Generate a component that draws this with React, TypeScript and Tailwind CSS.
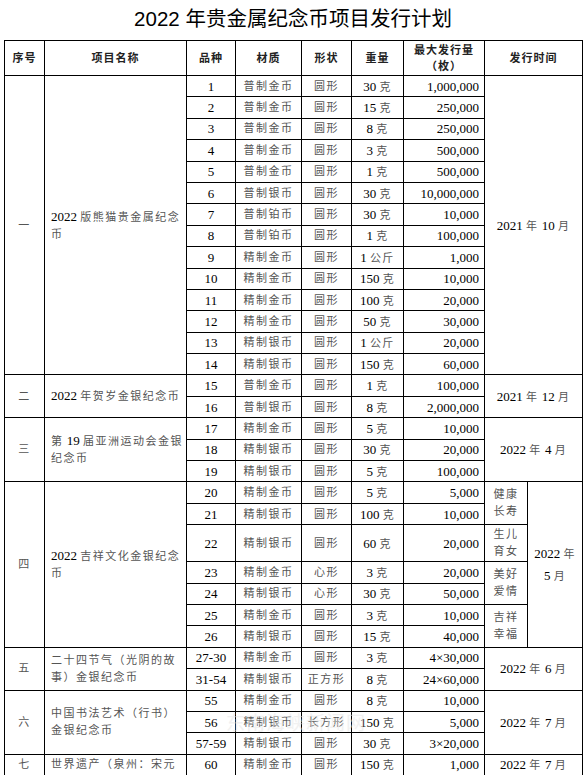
import React from "react";

type Row = [string, string, string, string, string];

interface Section {
  no: string;
  name: string[];
  date: string[];
  rows: Row[];
}

const sections: Section[] = [
  {
    no: "一",
    name: ["2022 版熊猫贵金属纪念", "币"],
    date: ["2021 年 10 月"],
    rows: [
      ["1", "普制金币", "圆形", "30 克", "1,000,000"],
      ["2", "普制金币", "圆形", "15 克", "250,000"],
      ["3", "普制金币", "圆形", "8 克", "250,000"],
      ["4", "普制金币", "圆形", "3 克", "500,000"],
      ["5", "普制金币", "圆形", "1 克", "500,000"],
      ["6", "普制银币", "圆形", "30 克", "10,000,000"],
      ["7", "普制铂币", "圆形", "30 克", "10,000"],
      ["8", "普制铂币", "圆形", "1 克", "100,000"],
      ["9", "精制金币", "圆形", "1 公斤", "1,000"],
      ["10", "精制金币", "圆形", "150 克", "10,000"],
      ["11", "精制金币", "圆形", "100 克", "20,000"],
      ["12", "精制金币", "圆形", "50 克", "30,000"],
      ["13", "精制银币", "圆形", "1 公斤", "20,000"],
      ["14", "精制银币", "圆形", "150 克", "60,000"],
    ],
  },
  {
    no: "二",
    name: ["2022 年贺岁金银纪念币"],
    date: ["2021 年 12 月"],
    rows: [
      ["15", "普制金币", "圆形", "1 克", "100,000"],
      ["16", "普制银币", "圆形", "8 克", "2,000,000"],
    ],
  },
  {
    no: "三",
    name: ["第 19 届亚洲运动会金银", "纪念币"],
    date: ["2022 年 4 月"],
    rows: [
      ["17", "精制金币", "圆形", "5 克", "10,000"],
      ["18", "精制银币", "圆形", "30 克", "20,000"],
      ["19", "精制银币", "圆形", "5 克", "100,000"],
    ],
  },
];

const later: Section[] = [
  {
    no: "五",
    name: ["二十四节气（光阴的故", "事）金银纪念币"],
    date: ["2022 年 6 月"],
    rows: [
      ["27-30", "精制金币", "圆形", "3 克", "4×30,000"],
      ["31-54", "精制银币", "正方形", "8 克", "24×60,000"],
    ],
  },
  {
    no: "六",
    name: ["中国书法艺术（行书）", "金银纪念币"],
    date: ["2022 年 7 月"],
    rows: [
      ["55", "精制金币", "圆形", "8 克", "10,000"],
      ["56", "精制银币", "长方形", "150 克", "5,000"],
      ["57-59", "精制银币", "圆形", "30 克", "3×20,000"],
    ],
  },
  {
    no: "七",
    name: ["世界遗产（泉州：宋元"],
    date: ["2022 年 7 月"],
    rows: [["60", "精制金币", "圆形", "150 克", "1,000"]],
  },
];

// 吉祥文化 rows with the theme sub-column
const jixiang: { row: Row; theme?: string[]; span?: number; tall?: boolean }[] = [
  { row: ["20", "精制金币", "圆形", "5 克", "5,000"], theme: ["健康", "长寿"], span: 2 },
  { row: ["21", "精制银币", "圆形", "100 克", "10,000"] },
  { row: ["22", "精制银币", "圆形", "60 克", "20,000"], theme: ["生儿", "育女"], span: 1, tall: true },
  { row: ["23", "精制金币", "心形", "3 克", "20,000"], theme: ["美好", "爱情"], span: 2 },
  { row: ["24", "精制银币", "心形", "30 克", "50,000"] },
  { row: ["25", "精制金币", "圆形", "3 克", "10,000"], theme: ["吉祥", "幸福"], span: 2 },
  { row: ["26", "精制银币", "圆形", "15 克", "40,000"] },
];

const Mixed = ({ text }: { text: string }) => {
  const parts = text.split(/([\u4e00-\u9fff（）：]+)/).filter((p) => p !== "");
  return (
    <>
      {parts.map((p, i) =>
        /[\u4e00-\u9fff（）：]/.test(p) ? (
          <span key={i} className="text-[11px] tracking-[1.5px] text-[#555]">
            {p}
          </span>
        ) : (
          <span key={i} className="text-[13px] text-black">
            {p}
          </span>
        )
      )}
    </>
  );
};

const cell = "border border-black p-0";

const DataCells = ({ row }: { row: Row }) => (
  <>
    <td className={`${cell} text-center`}>
      <Mixed text={row[0]} />
    </td>
    <td className={`${cell} text-center`}>
      <Mixed text={row[1]} />
    </td>
    <td className={`${cell} text-center`}>
      <Mixed text={row[2]} />
    </td>
    <td className={`${cell} text-center`}>
      <Mixed text={row[3]} />
    </td>
    <td className={`${cell} text-right pr-[5px]`}>
      <Mixed text={row[4]} />
    </td>
  </>
);

const SectionRows = ({ s }: { s: Section }) => (
  <>
    {s.rows.map((r, i) => (
      <tr key={r[0]} className="h-[21.4px]">
        {i === 0 && (
          <>
            <td rowSpan={s.rows.length} className={`${cell} text-center`}>
              <Mixed text={s.no} />
            </td>
            <td rowSpan={s.rows.length} className={`${cell} text-left pl-[6px] leading-[17px]`}>
              {s.name.map((l, k) => (
                <div key={k} className="whitespace-nowrap">
                  <Mixed text={l} />
                </div>
              ))}
            </td>
          </>
        )}
        <DataCells row={r} />
        {i === 0 && (
          <td rowSpan={s.rows.length} colSpan={2} className={`${cell} text-center`}>
            <Mixed text={s.date[0]} />
          </td>
        )}
      </tr>
    ))}
  </>
);

export default function App() {
  return (
    <div
      className="w-[586px] h-[775px] overflow-hidden bg-white relative"
      style={{ fontFamily: '"Liberation Serif", "Noto Sans CJK SC", serif' }}
    >
      <h1
        className="text-center text-[20.5px] leading-none pt-[9px] h-[40px] text-black"
        style={{ fontFamily: '"Liberation Sans", "Noto Sans CJK SC", sans-serif' }}
      >
        2022 年贵金属纪念币项目发行计划
      </h1>
      <table className="ml-[4px] w-[578px] table-fixed border-collapse leading-none text-[11px]">
        <colgroup>
          <col className="w-[40px]" />
          <col className="w-[142px]" />
          <col className="w-[49px]" />
          <col className="w-[66px]" />
          <col className="w-[50px]" />
          <col className="w-[52px]" />
          <col className="w-[81px]" />
          <col className="w-[43px]" />
          <col className="w-[55px]" />
        </colgroup>
        <thead>
          <tr className="h-[35px] text-[11px] font-bold tracking-[1px] text-[#222]">
            <th className={`${cell}`}>序号</th>
            <th className={`${cell}`}>项目名称</th>
            <th className={`${cell}`}>品种</th>
            <th className={`${cell}`}>材质</th>
            <th className={`${cell}`}>形状</th>
            <th className={`${cell}`}>重量</th>
            <th className={`${cell} leading-[16px]`}>
              最大发行量
              <br />
              （枚）
            </th>
            <th colSpan={2} className={`${cell}`}>
              发行时间
            </th>
          </tr>
        </thead>
        <tbody>
          {sections.map((s) => (
            <SectionRows key={s.no} s={s} />
          ))}
          {jixiang.map((j, i) => (
            <tr key={j.row[0]} className={j.tall ? "h-[37px]" : "h-[21.4px]"}>
              {i === 0 && (
                <>
                  <td rowSpan={7} className={`${cell} text-center`}>
                    <Mixed text="四" />
                  </td>
                  <td rowSpan={7} className={`${cell} text-left pl-[6px] leading-[17px]`}>
                    <div className="whitespace-nowrap">
                      <Mixed text="2022 吉祥文化金银纪念" />
                    </div>
                    <div>
                      <Mixed text="币" />
                    </div>
                  </td>
                </>
              )}
              <DataCells row={j.row} />
              {j.theme && (
                <td rowSpan={j.span} className={`${cell} text-center leading-[17px]`}>
                  {j.theme.map((t) => (
                    <div key={t}>
                      <Mixed text={t} />
                    </div>
                  ))}
                </td>
              )}
              {i === 0 && (
                <td rowSpan={7} className={`${cell} text-center leading-[22px]`}>
                  <div>
                    <Mixed text="2022 年" />
                  </div>
                  <div>
                    <Mixed text="5 月" />
                  </div>
                </td>
              )}
            </tr>
          ))}
          {later.map((s) => (
            <SectionRows key={s.no} s={s} />
          ))}
        </tbody>
      </table>
      <div
        className="absolute left-[226px] top-[708px] text-[19px] tracking-[1px] text-[#e4e4e4] opacity-50 pointer-events-none"
        style={{ fontFamily: '"Noto Sans CJK SC", sans-serif' }}
      >
        东南海峡新闻网
      </div>
    </div>
  );
}
